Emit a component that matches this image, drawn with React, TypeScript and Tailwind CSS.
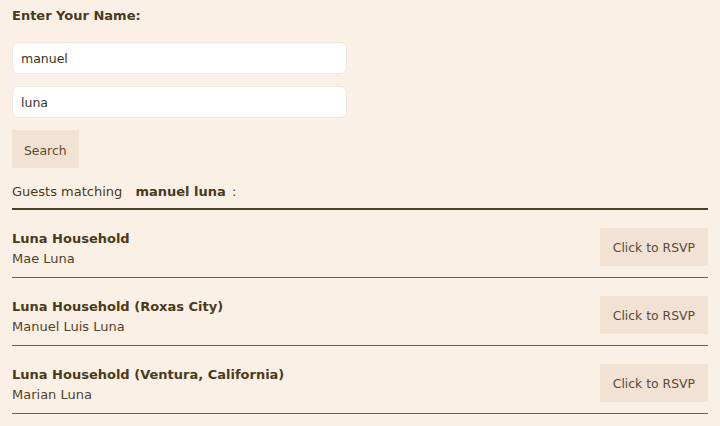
import { useState } from 'react'

interface Household {
  id: string
  name: string
  guests: string
}

const results: Household[] = [
  { id: 'h1', name: 'Luna Household', guests: 'Mae Luna' },
  { id: 'h2', name: 'Luna Household (Roxas City)', guests: 'Manuel Luis Luna' },
  { id: 'h3', name: 'Luna Household (Ventura, California)', guests: 'Marian Luna' },
]

export default function App() {
  const [first, setFirst] = useState('manuel')
  const [last, setLast] = useState('luna')

  return (
    <div
      className="min-h-screen bg-[#fbf0e5] px-3 pt-[6px] text-[13px] leading-5 text-[#4a3a1c]"
      style={{ fontFamily: '"DejaVu Sans", Verdana, sans-serif' }}
    >
      <div className="font-bold">Enter Your Name:</div>

      <div className="mt-4 flex w-[335px] flex-col gap-3">
        <input
          value={first}
          onChange={(e) => setFirst(e.target.value)}
          className="h-8 rounded-md border border-[#efe7df] bg-white px-2 text-[12.5px] text-[#3b3328] outline-none"
        />
        <input
          value={last}
          onChange={(e) => setLast(e.target.value)}
          className="h-8 rounded-md border border-[#efe7df] bg-white px-2 text-[12.5px] text-[#3b3328] outline-none"
        />
      </div>

      <button
        type="button"
        className="mt-3 h-[38px] bg-[#f1e2d3] px-3 pt-[3px] text-[12.4px] text-[#5b4a35]"
      >
        Search
      </button>

      <div className="mt-[14px]">
        Guests matching <span className="ml-[9px] mr-[2px] font-bold">manuel luna</span> :
      </div>

      <div className="mt-[6px] border-t-2 border-[#4d3f22]">
        {results.map((r) => (
          <div
            key={r.id}
            className="flex items-start justify-between border-b border-[#6b5f4c] pt-[19px] pb-2"
          >
            <div>
              <div className="font-bold">{r.name}</div>
              <div className="text-[#52432c]">{r.guests}</div>
            </div>
            <button
              type="button"
              className="-mt-px h-[38px] bg-[#f1e2d3] px-[13px] pt-px text-[12.4px] text-[#5b4a35]"
            >
              Click to RSVP
            </button>
          </div>
        ))}
      </div>
    </div>
  )
}
